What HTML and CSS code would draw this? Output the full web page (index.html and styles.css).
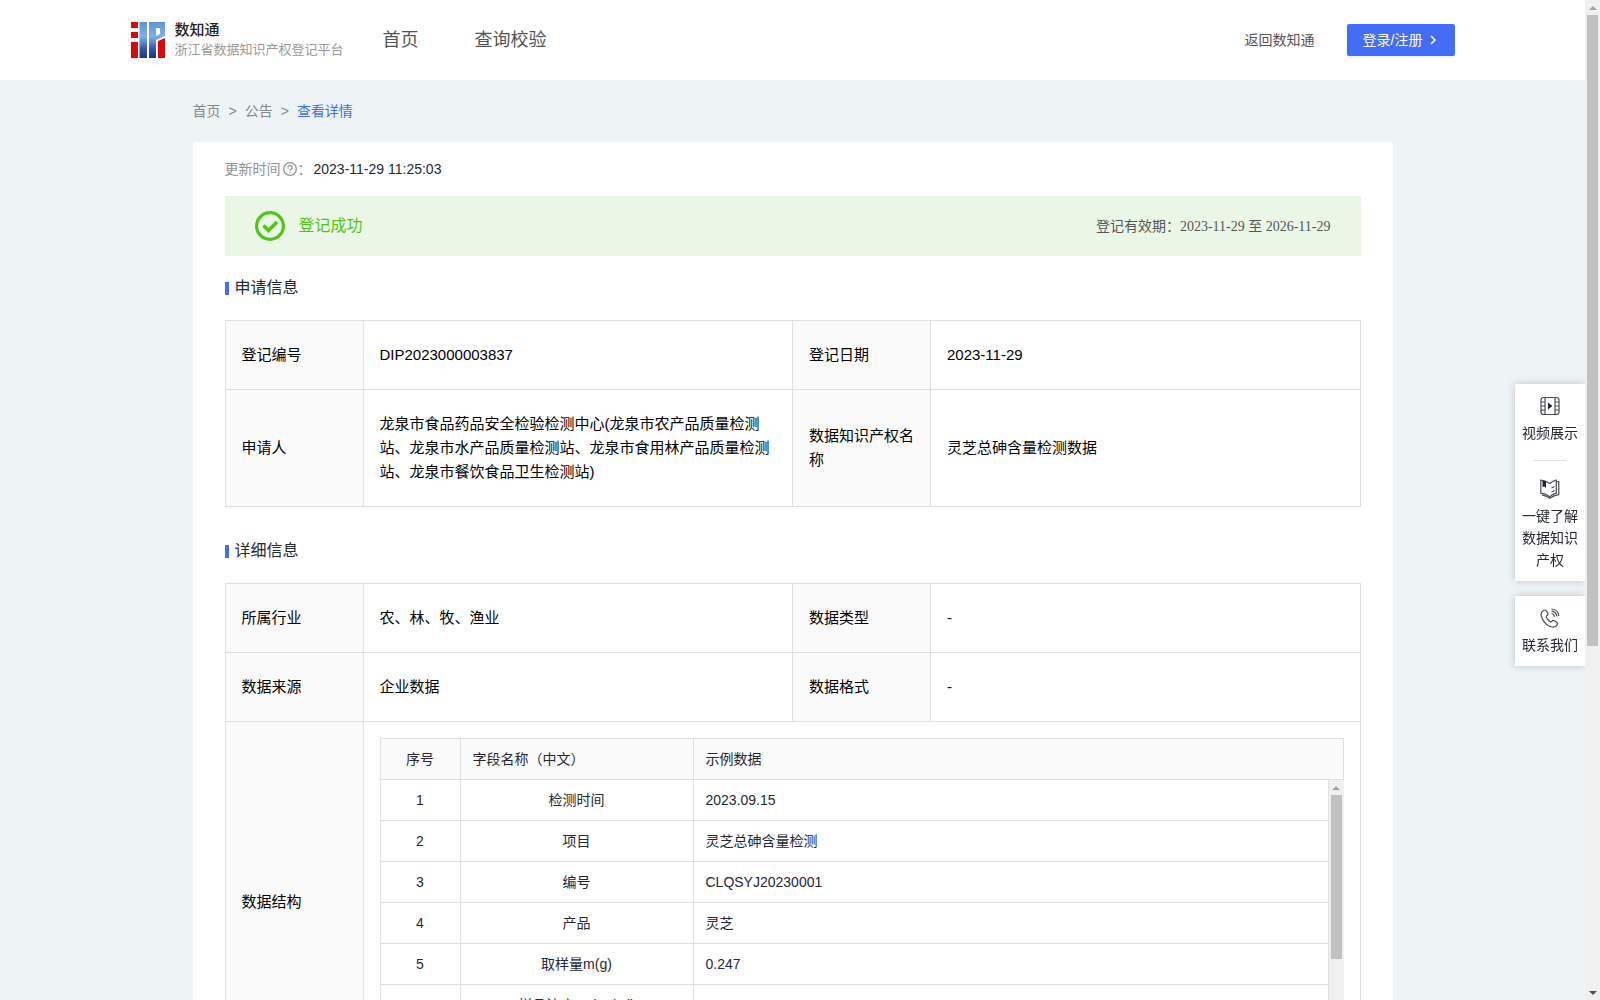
FILE: index.html
```html
<!DOCTYPE html>
<html lang="zh-CN">
<head>
    <meta charset="UTF-8">
    <meta name="viewport" content="width=device-width, initial-scale=1.0">
    <title>浙江省数据知识产权登记平台</title>
    <link rel="stylesheet" href="styles.css">
</head>
<body>

<div class="page">
<header class="header">
    <div class="header-inner">
        <a href="#" class="logo">
            <svg class="logo-mark" viewBox="0 0 34 36" aria-hidden="true">
                <defs>
                    <linearGradient id="blue" gradientUnits="userSpaceOnUse" x1="0" y1="0" x2="0" y2="36">
                        <stop offset="0" stop-color="#5f94d8"/>
                        <stop offset="0.4" stop-color="#80b0e8"/>
                        <stop offset="0.75" stop-color="#3458a4"/>
                        <stop offset="1" stop-color="#1c3584"/>
                    </linearGradient>
                </defs>
                <path fill="#d80a0a" d="M0 0h7v6H0zM0 10h7v6H0zM0 20h7v16H0zM27 19l7-3v20h-7z"/>
                <path fill="url(#blue)" fill-rule="evenodd" d="M8.500 0H16v36H8.500zM18 0h16v14l-9 4v18h-7zM25 6v8l4-2V6z"/>
            </svg>
            <span class="logo-text">
                <strong>数知通</strong>
                <span>浙江省数据知识产权登记平台</span>
            </span>
        </a>
        <nav class="nav">
            <a href="#">首页</a>
            <a href="#">查询校验</a>
        </nav>
        <a href="#" class="back-link">返回数知通</a>
        <button type="button" class="login-btn">登录/注册
            <svg width="12" height="12" viewBox="0 0 12 12" aria-hidden="true"><path d="M4 2l4 4-4 4" fill="none" stroke="#fff" stroke-width="1.500"/></svg>
        </button>
    </div>
</header>

<main class="container">
    <nav class="breadcrumb">
        <a href="#">首页</a><span>&gt;</span><a href="#">公告</a><span>&gt;</span><a href="#" class="current">查看详情</a>
    </nav>

    <div class="card">
        <div class="update-time">
            <span>更新时间</span>
            <svg width="16" height="16" viewBox="0 0 16 16" fill="none" stroke="#909399" stroke-width="1.300" aria-hidden="true">
                <circle cx="8" cy="8" r="6.300"/>
                <path d="M5.900 6.500a2.100 2.100 0 1 1 3.200 1.800c-.8.5-1.100.7-1.100 1.500M8 10.800v1.200"/>
            </svg>
            <span>：</span>
            <span class="update-value">2023-11-29 11:25:03</span>
        </div>

        <div class="status">
            <svg width="30" height="30" viewBox="0 0 30 30" fill="none" stroke="#52c41a" aria-hidden="true">
                <circle cx="15" cy="15" r="13.400" stroke-width="3.200"/>
                <path d="M8.500 14.500l5 5 8.500-8.500" stroke-width="3.600"/>
            </svg>
            <span class="status-text">登记成功</span>
            <span class="validity">登记有效期：<span class="date">2023-11-29 至 2026-11-29</span></span>
        </div>

        <h2 class="section-title">申请信息</h2>
        <table class="info-table">
            <tr>
                <th scope="row">登记编号</th>
                <td>DIP2023000003837</td>
                <th scope="row">登记日期</th>
                <td>2023-11-29</td>
            </tr>
            <tr>
                <th scope="row">申请人</th>
                <td>龙泉市食品药品安全检验检测中心(龙泉市农产品质量检测站、龙泉市水产品质量检测站、龙泉市食用林产品质量检测站、龙泉市餐饮食品卫生检测站)</td>
                <th scope="row">数据知识产权名称</th>
                <td>灵芝总砷含量检测数据</td>
            </tr>
        </table>

        <h2 class="section-title">详细信息</h2>
        <table class="info-table">
            <tr>
                <th scope="row">所属行业</th>
                <td>农、林、牧、渔业</td>
                <th scope="row">数据类型</th>
                <td>-</td>
            </tr>
            <tr>
                <th scope="row">数据来源</th>
                <td>企业数据</td>
                <th scope="row">数据格式</th>
                <td>-</td>
            </tr>
            <tr>
                <th scope="row">数据结构</th>
                <td colspan="3" class="nested-cell">
                    <table class="field-table">
                        <thead>
                            <tr><th scope="col" class="col-no">序号</th><th scope="col" class="col-name">字段名称（中文）</th><th scope="col">示例数据</th></tr>
                        </thead>
                    </table>
                    <div class="field-body">
                        <div class="field-scroll">
                            <table class="field-table">
                                <tbody>
                                    <tr><td class="col-no">1</td><td class="col-name">检测时间</td><td>2023.09.15</td></tr>
                                    <tr><td>2</td><td>项目</td><td>灵芝总砷含量检测</td></tr>
                                    <tr><td>3</td><td>编号</td><td>CLQSYJ20230001</td></tr>
                                    <tr><td>4</td><td>产品</td><td>灵芝</td></tr>
                                    <tr><td>5</td><td>取样量m(g)</td><td>0.247</td></tr>
                                    <tr><td>6</td><td>样品浓度Cs(ng/ml)</td><td>0.008</td></tr>
                                    <tr><td>7</td><td></td><td></td></tr>
                                    <tr><td>8</td><td></td><td></td></tr>
                                    <tr><td>9</td><td></td><td></td></tr>
                                    <tr><td>10</td><td></td><td></td></tr>
                                    <tr><td>11</td><td></td><td></td></tr>
                                </tbody>
                            </table>
                        </div>
                        <div class="scrollbar" aria-hidden="true">
                            <span class="arrow up"></span>
                            <div class="rail"><div class="thumb"></div></div>
                            <span class="arrow down"></span>
                        </div>
                    </div>
                </td>
            </tr>
        </table>
    </div>
</main>
</div>

<div class="scrollbar" aria-hidden="true">
    <span class="arrow up"></span>
    <div class="rail"><div class="thumb"></div></div>
    <span class="arrow down"></span>
</div>

<aside class="side">
    <div class="side-card">
        <a href="#" class="side-item">
            <svg width="20" height="20" viewBox="0 0 20 20" fill="none" stroke="#4a4c55" stroke-width="1.200" aria-hidden="true">
                <rect x="1" y="1.500" width="18" height="17" rx="2.500"/>
                <path d="M5 1.500v17M15 1.500v17M1 6h4M1 10h4M1 14h4M15 6h4M15 10h4M15 14h4"/>
                <path d="M8 6.500l4.500 3.500L8 13.500z" fill="#22242e" stroke="none"/>
            </svg>
            <span>视频展示</span>
        </a>
        <a href="#" class="side-item">
            <svg width="20" height="20" viewBox="0 0 20 20" fill="none" stroke="#4a4c55" stroke-width="1.200" aria-hidden="true">
                <path d="M.8 1.200c3 .2 6 1.300 9 3.300 2-1.700 4-2.800 6.500-3.300v13c-2.500.6-4.500 1.800-6.500 3.600-3-2.200-6-3.400-9-3.600z"/>
                <path d="M16.300 3l2.500-.5v13.200c-3 .4-6 1.300-9 3.500-3-2-5.500-2.800-8-3.300M11.500 9l3-1.500M11.500 13l3-1.500"/>
                <path d="M2.500 1.500l3.500 1v6.500L4.300 7.500 2.500 8z" fill="#22242e" stroke="none"/>
            </svg>
            <span>一键了解数据知识产权</span>
        </a>
    </div>
    <div class="side-card">
        <a href="#" class="side-item">
            <svg width="20" height="20" viewBox="0 0 20 20" fill="none" stroke="#4a4c55" stroke-width="1.200" aria-hidden="true">
                <path d="M3.500 2.500C1 4 .5 7 2 10c2 4.500 5 7.500 9 8.700 2.500.7 4.800.2 6-1.700.8-1.300.4-2.300-.7-3.100l-1.800-1.200c-1-.6-1.900-.4-2.500.4-.7 1-1.500 1-2.500.2C8 12 7 10.800 6.400 9.500 6 8.500 6.200 8 7 7.500c1-.6 1.200-1.400.6-2.500L6.500 3C5.800 1.800 4.700 1.700 3.500 2.500z"/>
                <path d="M11.500 5.500c1.800.3 2.800 1.400 3 3.200M11.500 3.200c3 .3 5 2.200 5.300 5.200M11.500 1c4.200.3 7 3 7.300 7"/>
            </svg>
            <span>联系我们</span>
        </a>
    </div>
</aside>

</body>
</html>
```
FILE: styles.css
```css
* {
    box-sizing: border-box;
}
body {
    display: flex;
    height: 100vh;
    margin: 0;
    overflow: hidden;
    background-color: #eef3f6;
    color: #262833;
    font-family: "Liberation Sans", "Noto Sans CJK SC", sans-serif;
    font-size: 14px;
    line-height: 22px;
}
a {
    color: inherit;
    text-decoration: none;
}
.page {
    flex: 1;
    min-width: 0;
    overflow-y: auto;
    scrollbar-width: none;
}

/* scrollbars */
.scrollbar {
    display: flex;
    flex-direction: column;
    flex: none;
    width: 15px;
    background: #f0f0f0;
}
.rail {
    flex: 1;
    padding: 0 2px;
}
.thumb {
    height: 65%;
    background: #c1c1c1;
}
.arrow {
    display: flex;
    align-items: center;
    justify-content: center;
    height: 15px;
}
.arrow::before {
    content: "";
    border: 4px solid transparent;
}
.arrow.up::before {
    border-top: 0;
    border-bottom-color: #a3a3a3;
}
.arrow.down::before {
    border-bottom: 0;
    border-top-color: #505050;
}

.header {
    background: #fff;
}
.header-inner {
    display: flex;
    align-items: center;
    max-width: 1324px;
    height: 80px;
    margin: 0 auto;
}
.logo {
    display: flex;
    align-items: center;
    gap: 10px;
}
.logo-mark {
    width: 34px;
    height: 36px;
}
.logo-text {
    display: flex;
    flex-direction: column;
    font-size: 13px;
    line-height: 20px;
    color: #999;
}
.logo-text strong {
    font-size: 15px;
    font-weight: 500;
    color: #222;
}
.nav {
    display: flex;
    gap: 56px;
    margin-left: 39px;
    font-size: 18px;
    color: #555;
}
.back-link {
    margin-left: auto;
    color: #555;
}
.login-btn {
    display: flex;
    align-items: center;
    gap: 4px;
    height: 32px;
    margin-left: 32px;
    padding: 0 16px;
    border: 0;
    border-radius: 2px;
    background: #446df5;
    box-shadow: 0 2px 0 rgba(0, 0, 0, 0.05);
    color: #fff;
    font: inherit;
}
.container {
    max-width: 1200px;
    margin: 0 auto;
    padding-bottom: 60px;
}
.breadcrumb {
    display: flex;
    gap: 8px;
    padding: 20px 0;
    color: #888;
}
.breadcrumb .current {
    color: #446df5;
}
.card {
    padding: 16px 32px 400px;
    border-radius: 4px;
    background: #fff;
}
.update-time {
    display: flex;
    align-items: center;
    color: #909399;
}
.update-time svg {
    margin-left: 1px;
}
.update-value {
    margin-left: 2px;
    color: #262833;
}
.status {
    display: flex;
    align-items: center;
    height: 60px;
    margin-top: 16px;
    padding: 0 30px;
    background: #ebf7e6;
}
.status-text {
    margin-left: 14px;
    font-size: 16px;
    color: #52c41a;
}
.validity {
    margin-left: auto;
    color: #555;
}
.date {
    font-family: "Liberation Serif", "Noto Sans CJK SC", serif;
}
.section-title {
    display: flex;
    align-items: center;
    gap: 6px;
    margin: 20px 0;
    font-size: 16px;
    font-weight: 400;
    line-height: 24px;
}
.section-title::before {
    content: "";
    width: 4px;
    height: 13px;
    background: #446df5;
}
.info-table + .section-title {
    margin-top: 32px;
}
.info-table {
    width: 100%;
    table-layout: fixed;
    border-collapse: collapse;
    font-size: 15px;
    line-height: 24px;
    color: #000;
}
.info-table th,
.info-table td {
    padding: 22px 16px;
    border: 1px solid #e0e0e0;
    font-weight: 400;
    text-align: left;
}
.info-table th {
    width: 138px;
    background: #fafafa;
}
.info-table .nested-cell {
    padding: 16px;
}
.info-table .field-table {
    font-size: 14px;
    line-height: 20px;
    color: #262833;
}
.field-table {
    width: 100%;
    table-layout: fixed;
    border-collapse: collapse;
}
.info-table .field-table th,
.info-table .field-table td {
    height: 41px;
    padding: 10px 12px;
}
.info-table .field-table th {
    width: auto;
}
.info-table .field-table .col-no {
    width: 80px;
    text-align: center;
}
.info-table .field-table .col-name {
    width: 233px;
}
.info-table .field-table td:nth-child(-n+2) {
    text-align: center;
}
.field-body {
    display: flex;
    height: 286px;
}
.field-scroll {
    flex: 1;
    min-width: 0;
    overflow-y: auto;
    scrollbar-width: none;
}
.info-table .field-body tr:first-child td {
    height: 40px;
    border-top: 0;
}
.field-body .thumb {
    height: 64%;
}

/* floating links on the right edge */
.side {
    position: fixed;
    top: 384px;
    right: 15px;
    display: flex;
    flex-direction: column;
    gap: 15px;
    width: 70px;
    clip-path: inset(-10px 0 -10px -10px);
}
.side-card {
    padding: 0 6px;
    background: #fff;
    box-shadow: 0 0 8px rgba(0, 0, 0, 0.2);
}
.side-item {
    display: flex;
    flex-direction: column;
    align-items: center;
    gap: 6px;
    padding: 12px 0 10px;
    text-align: center;
}
.side-item + .side-item::before {
    content: "";
    width: 32px;
    height: 1px;
    margin: -6px 0 12px;
    background: #e0e0e0;
}
```
